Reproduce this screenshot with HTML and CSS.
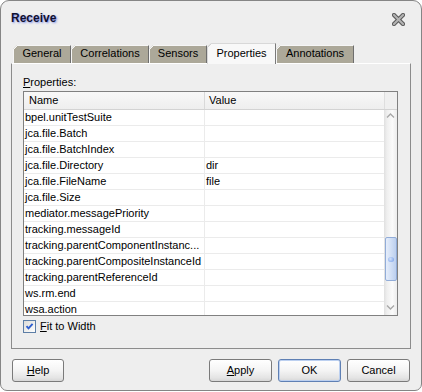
FILE: index.html
```html
<!DOCTYPE html>
<html>
<head>
<meta charset="utf-8">
<link rel="stylesheet" href="styles.css">
</head>
<body>
<div class="window">
  <div class="titlebar">
    <span class="title">Receive</span>
    <svg class="close" width="13" height="13" viewBox="0 0 13 13">
      <path d="M2 2L11 11M11 2L2 11" stroke="#5a5a5a" stroke-width="4.2" stroke-linecap="square"/>
      <path d="M2 2L11 11M11 2L2 11" stroke="#b4b4b4" stroke-width="2" stroke-linecap="square"/>
    </svg>
  </div>
  <div class="tabs">
    <div class="tab tab-general">General</div>
    <div class="tab tab-correlations">Correlations</div>
    <div class="tab tab-sensors">Sensors</div>
    <div class="tab tab-properties active">Properties</div>
    <div class="tab tab-annotations">Annotations</div>
  </div>
  <div class="panel">
    <div class="label"><u>P</u>roperties:</div>
    <div class="table">
      <div class="thead">
        <div class="th name">Name</div>
        <div class="th value">Value</div>
        <div class="th corner"></div>
      </div>
      <div class="tbody">
        <div class="rows">
          <div class="row"><div class="cell name">bpel.unitTestSuite</div><div class="cell value"></div></div>
          <div class="row"><div class="cell name">jca.file.Batch</div><div class="cell value"></div></div>
          <div class="row"><div class="cell name">jca.file.BatchIndex</div><div class="cell value"></div></div>
          <div class="row"><div class="cell name">jca.file.Directory</div><div class="cell value">dir</div></div>
          <div class="row"><div class="cell name">jca.file.FileName</div><div class="cell value">file</div></div>
          <div class="row"><div class="cell name">jca.file.Size</div><div class="cell value"></div></div>
          <div class="row"><div class="cell name">mediator.messagePriority</div><div class="cell value"></div></div>
          <div class="row"><div class="cell name">tracking.messageId</div><div class="cell value"></div></div>
          <div class="row"><div class="cell name">tracking.parentComponentInstanc...</div><div class="cell value"></div></div>
          <div class="row"><div class="cell name">tracking.parentCompositeInstanceId</div><div class="cell value"></div></div>
          <div class="row"><div class="cell name">tracking.parentReferenceId</div><div class="cell value"></div></div>
          <div class="row"><div class="cell name">ws.rm.end</div><div class="cell value"></div></div>
          <div class="row"><div class="cell name">wsa.action</div><div class="cell value"></div></div>
        </div>
        <div class="vscroll">
          <svg class="arrow" width="13" height="9" viewBox="0 0 13 9">
            <path d="M3 6.5L6.5 3L10 6.5" fill="none" stroke="#a8a8a8" stroke-width="1.4"/>
          </svg>
          <div class="thumb"><span class="grip"></span></div>
          <svg class="arrow down" width="13" height="9" viewBox="0 0 13 9">
            <path d="M3 2.5L6.5 6L10 2.5" fill="none" stroke="#a8a8a8" stroke-width="1.4"/>
          </svg>
        </div>
      </div>
    </div>
    <div class="check-row">
      <span class="checkbox">
        <svg width="11" height="11" viewBox="0 0 11 11">
          <path d="M2.5 5.2L4.5 7.4L8.6 2.8" fill="none" stroke="#2f5fcf" stroke-width="1.9"/>
        </svg>
      </span>
      <span class="check-label"><u>F</u>it to Width</span>
    </div>
  </div>
  <div class="buttons">
    <button class="btn btn-help"><u>H</u>elp</button>
    <div class="spacer"></div>
    <button class="btn"><u>A</u>pply</button>
    <button class="btn btn-default">OK</button>
    <button class="btn">Cancel</button>
  </div>
</div>
</body>
</html>
```
FILE: styles.css
```css
html, body {
  margin: 0;
  padding: 0;
  background: #ffffff;
}

body {
  font-family: "Liberation Sans", Arial, sans-serif;
  font-size: 11px;
  color: #000;
}

.window {
  box-sizing: border-box;
  width: 422px;
  height: 391px;
  border: 1px solid #858585;
  border-radius: 9px 9px 7px 7px;
  background: #eeeeee;
  display: flex;
  flex-direction: column;
}

.titlebar {
  box-sizing: border-box;
  height: 42px;
  padding: 10px 16px 0 10px;
  display: flex;
  justify-content: space-between;
  align-items: flex-start;
}

.title {
  font-size: 12px;
  font-weight: bold;
  line-height: 14px;
  color: #101030;
  text-shadow: 1px 1px 2px rgba(90, 110, 230, 0.75);
}

.close {
  display: block;
  margin-top: 2px;
}

.tabs {
  height: 20px;
  padding-left: 12px;
  display: flex;
  align-items: flex-end;
}

.tab {
  box-sizing: border-box;
  height: 18px;
  padding-top: 1px;
  line-height: 13px;
  text-align: center;
  border-top: 1px solid #f6f6f6;
  border-left: 1px solid #f6f6f6;
  border-right: 1px solid #6e6e6e;
  background: linear-gradient(135deg, transparent 2.8px, #f6f6f6 2.8px, #f6f6f6 4px, transparent 4px) 0 0 / 10px 10px no-repeat border-box, #aca899;
  clip-path: polygon(0 4px, 4px 0, 100% 0, 100% 100%, 0 100%);
  white-space: nowrap;
}

.tab-general { width: 58px; }
.tab-correlations { width: 78px; }
.tab-sensors { width: 58px; }
.tab-properties { width: 69px; }
.tab-annotations { width: 78px; }

.tab.active {
  height: 21px;
  margin-bottom: -1px;
  padding-top: 3px;
  position: relative;
  z-index: 1;
  border-top-color: #d8d8d8;
  border-left-color: #d8d8d8;
  border-right-color: #7a7a7a;
  background: linear-gradient(135deg, transparent 2.8px, #d0d0d0 2.8px, #d0d0d0 4px, transparent 4px) 0 0 / 10px 10px no-repeat border-box, #f8f8f8;
}

.panel {
  margin: 0 10px;
  padding: 12px 12px 15px 11px;
  border: 1px solid #8c8c8c;
  border-top-color: #ffffff;
  display: flex;
  flex-direction: column;
}

.label {
  line-height: 13px;
  height: 13px;
}

.table {
  box-sizing: border-box;
  margin-top: 2px;
  height: 225px;
  border: 1px solid #808080;
  background: #ffffff;
  display: flex;
  flex-direction: column;
}

.thead {
  box-sizing: border-box;
  height: 18px;
  border-bottom: 1px solid #d3d3d3;
  display: flex;
  background: linear-gradient(#f8f8f8, #eeeeee);
}

.th {
  line-height: 17px;
  white-space: nowrap;
}

.th.name {
  box-sizing: border-box;
  width: 181px;
  padding-left: 5px;
  border-right: 1px solid #d9d9d9;
}

.th.value {
  flex: 1;
  padding-left: 4px;
  border-right: 1px solid #dedede;
}

.th.corner {
  width: 12px;
  background: #efefef;
}

.tbody {
  flex: 1;
  display: flex;
  min-height: 0;
}

.rows {
  flex: 1;
  overflow: hidden;
}

.row {
  box-sizing: border-box;
  height: 16px;
  border-bottom: 1px solid #ebebeb;
  display: flex;
}

.cell {
  line-height: 15px;
  white-space: nowrap;
  overflow: hidden;
}

.cell.name {
  box-sizing: border-box;
  width: 181px;
  padding-left: 1px;
  border-right: 1px solid #ebebeb;
}

.cell.value {
  flex: 1;
  padding-left: 1px;
}

.vscroll {
  width: 13px;
  display: flex;
  flex-direction: column;
  background: linear-gradient(to right, #e0e0e0 0, #efefef 3px, #fbfbfb 65%, #ececec 100%);
}

.arrow {
  display: block;
  margin-top: 1px;
}

.arrow.down {
  margin-top: auto;
  margin-bottom: 3px;
}

.thumb {
  box-sizing: border-box;
  margin: 117px 0 0 1px;
  height: 44px;
  border: 1px solid #91acd8;
  border-radius: 2px;
  background: linear-gradient(to right, #e6eefb, #cddcf4 60%, #bccfee);
  display: flex;
  align-items: center;
  justify-content: center;
}

.grip {
  width: 6px;
  height: 5px;
  border-radius: 50%;
  background: radial-gradient(circle at 40% 40%, #d4e2fb, #6f9ae6);
}

.check-row {
  margin-top: 4px;
  height: 13px;
  display: flex;
  align-items: center;
  gap: 4px;
  line-height: 13px;
}

.checkbox {
  box-sizing: border-box;
  width: 13px;
  height: 13px;
  border: 1px solid #5d7ea6;
  background: linear-gradient(135deg, #dcdcd8, #ffffff);
  display: flex;
}

.checkbox svg {
  display: block;
}

.buttons {
  margin-top: 10px;
  padding: 0 11px;
  display: flex;
  gap: 6px;
}

.spacer {
  flex: 1;
}

.btn {
  box-sizing: border-box;
  width: 63px;
  height: 23px;
  padding: 0;
  border: 1px solid #7a7a7a;
  border-radius: 3px;
  background: linear-gradient(#ffffff, #f4f4f4 50%, #e4e4e4 85%, #d6d6d6);
  font-family: "Liberation Sans", Arial, sans-serif;
  font-size: 11px;
  line-height: 13px;
  color: #000;
}

.btn-help {
  width: 52px;
}

.btn-default {
  border-color: #5f80b4;
  box-shadow: inset 0 0 0 1px #bcd0f0;
}
```
